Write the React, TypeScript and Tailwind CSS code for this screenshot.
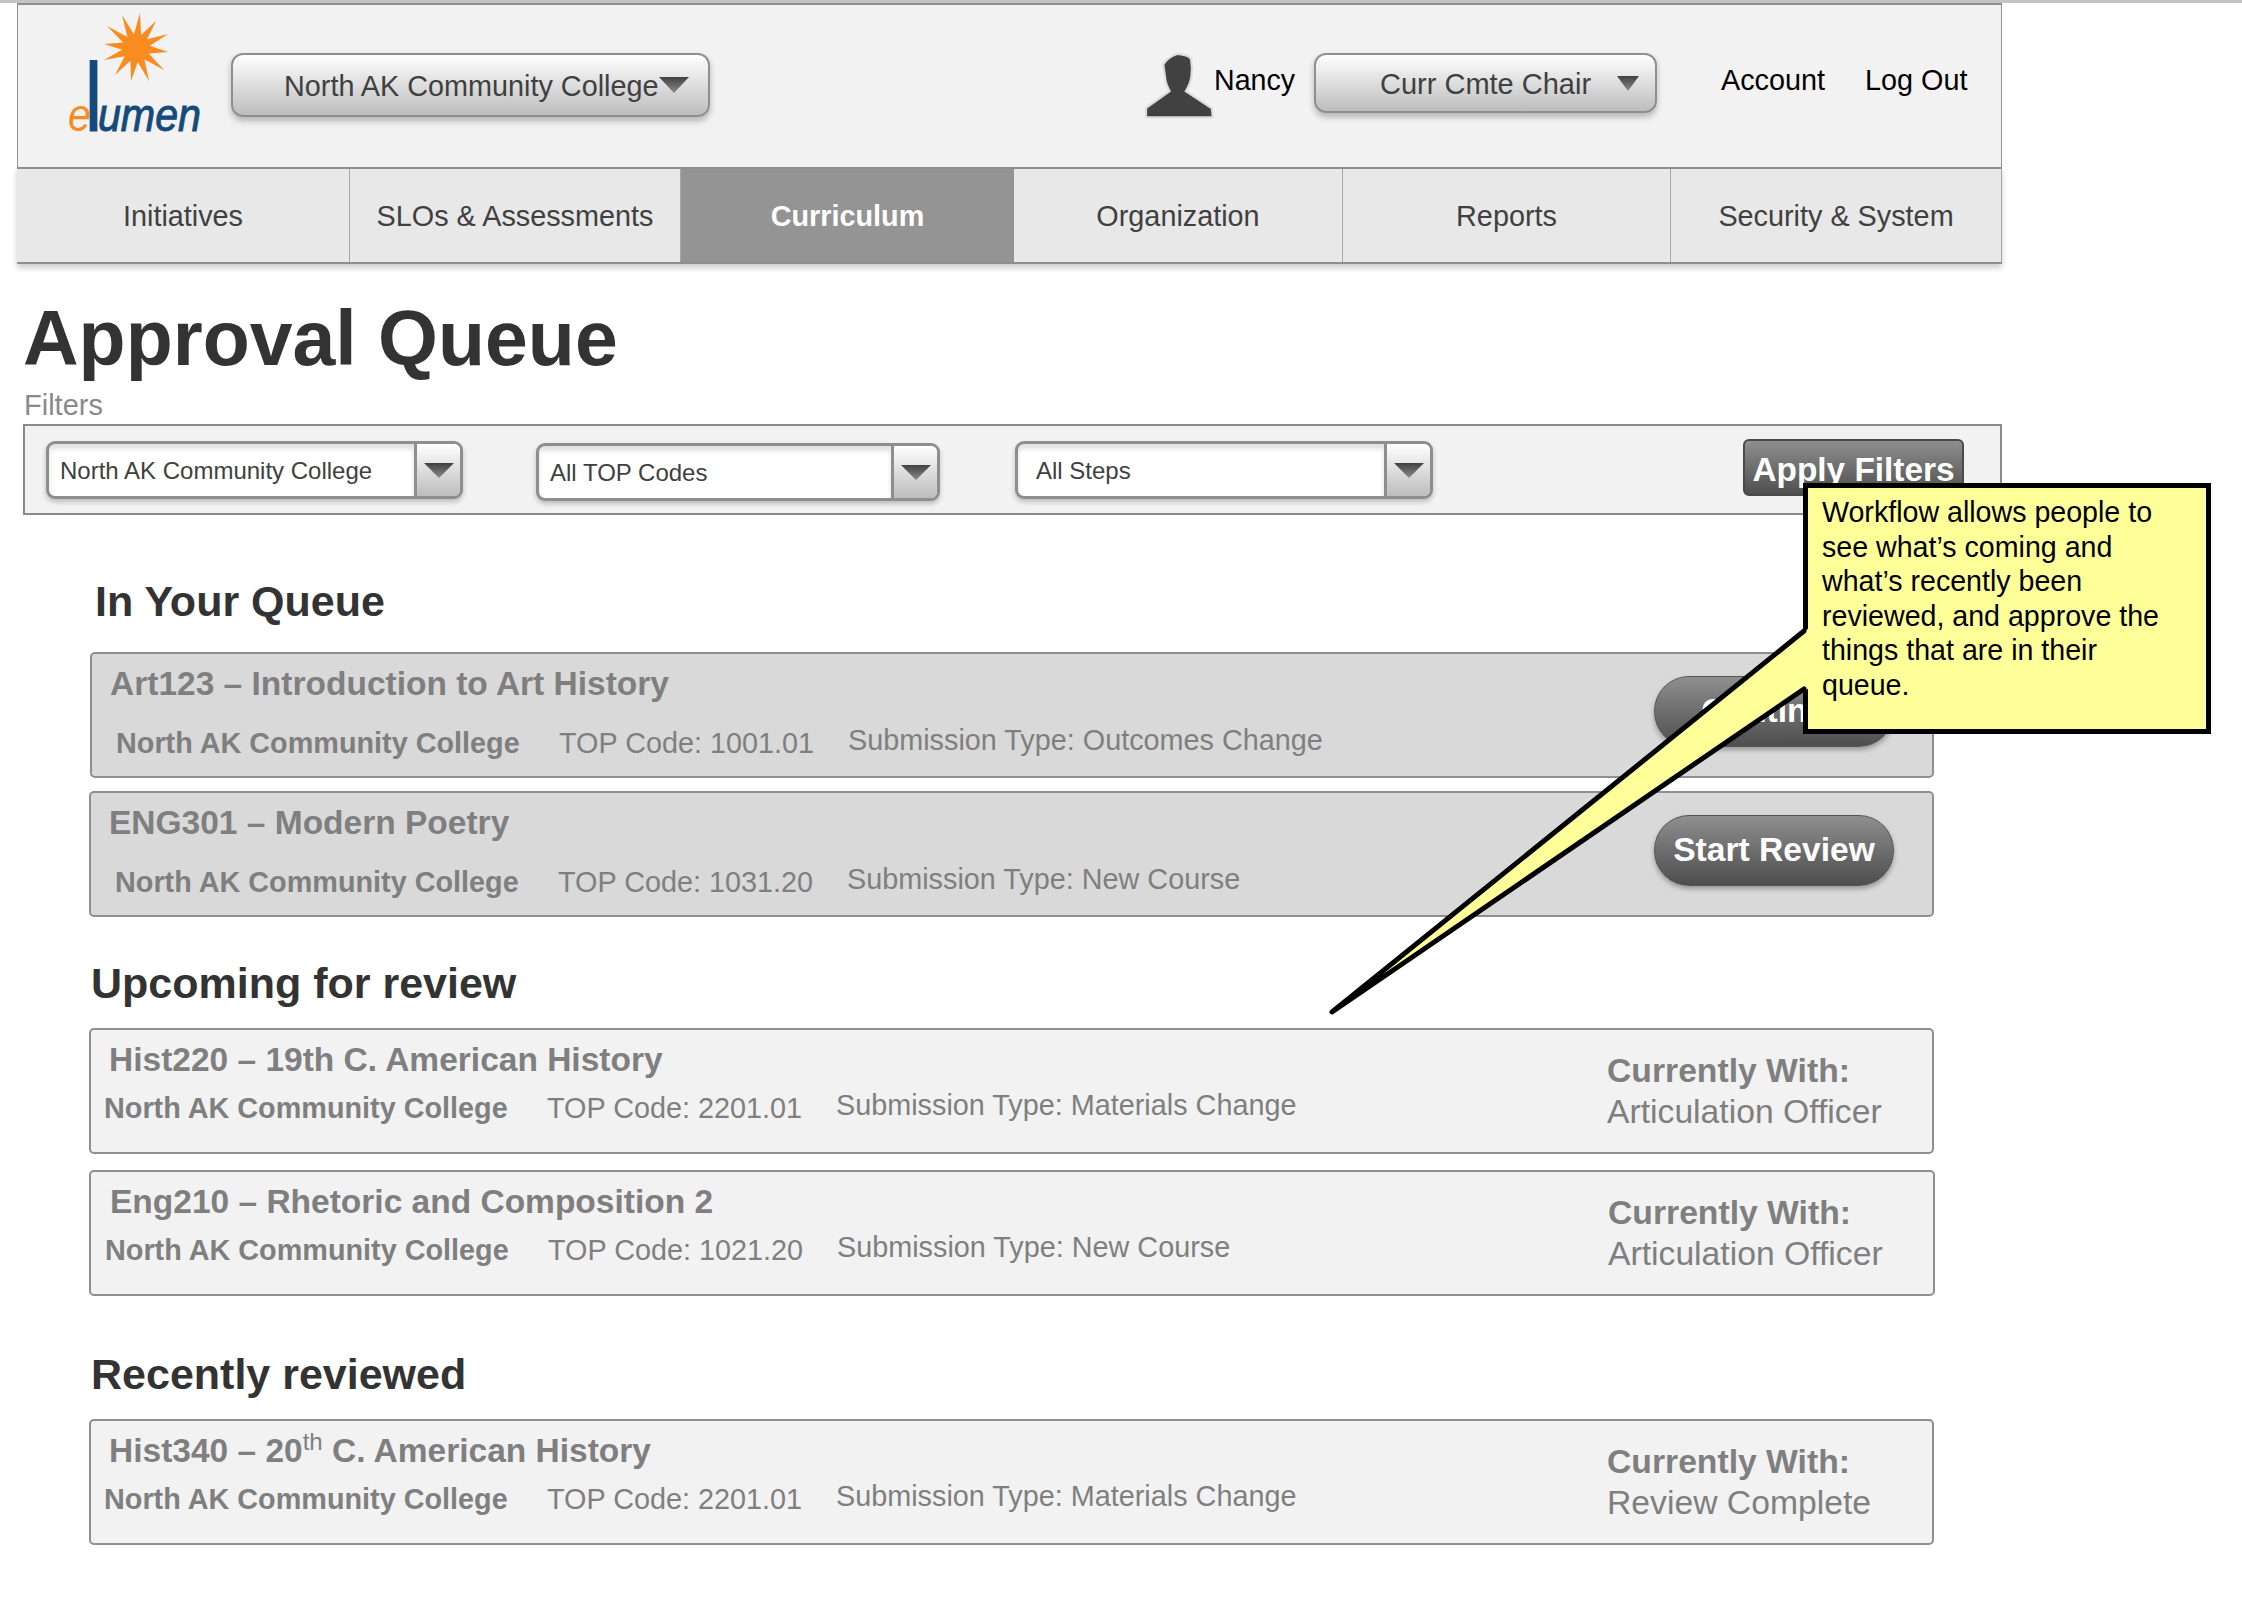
import type { ReactNode } from "react";

const tabs = [
  { label: "Initiatives", width: "w-[333px]" },
  { label: "SLOs & Assessments", width: "w-[331px]" },
  { label: "Curriculum", width: "w-[333px]", active: true },
  { label: "Organization", width: "w-[329px]" },
  { label: "Reports", width: "w-[328px]" },
  { label: "Security & System", width: "w-[331px]" },
];

const sunTips = [
  [99, 13], [115, 21], [127, 34], [127, 52], [123, 70], [108, 81],
  [90, 81], [74, 75], [63, 60], [63, 44], [66, 26], [81, 15],
];

function sunPoints() {
  const cx = 95;
  const cy = 48;
  const pts: string[] = [];
  sunTips.forEach(([x, y], i) => {
    const [nx, ny] = sunTips[(i + 1) % sunTips.length];
    pts.push(`${x},${y}`);
    const mx = (x + nx) / 2 - cx;
    const my = (y + ny) / 2 - cy;
    const len = Math.hypot(mx, my);
    pts.push(`${cx + (mx / len) * 14},${cy + (my / len) * 14}`);
  });
  return pts.join(" ");
}

function Logo() {
  return (
    <svg viewBox="0 8 170 132" className="ml-[23px] mt-[3px] h-[132px] w-[170px] shrink-0">
      <polygon points={sunPoints()} fill="#f98b1f" />
      <text x="27" y="131" fontFamily="Liberation Sans" fontSize="46" fill="#154a7c" textLength="133" lengthAdjust="spacingAndGlyphs">
        <tspan fill="#f98b1f" fontStyle="italic">e</tspan>
        <tspan dx="-8" fontSize="98">l</tspan>
        <tspan dx="-6" fontStyle="italic" stroke="#154a7c" strokeWidth="1">umen</tspan>
      </text>
    </svg>
  );
}

function Person() {
  return (
    <svg viewBox="60 60 240 220" className="ml-[431px] mt-[45px] h-[73px] w-[80px] shrink-0">
      <path
        d="M170 75 Q200 78 207 88 Q212 115 208 140 Q204 165 190 185 L270 238 L272 260 L78 260 L78 236 L150 185 Q136 160 135 140 L130 105 Q140 85 170 75 Z"
        fill="#414141"
        stroke="#dcdcdc"
        strokeWidth="13"
        paintOrder="stroke"
        strokeLinejoin="round"
      />
    </svg>
  );
}

function Arrow({ className }: { className: string }) {
  return (
    <svg viewBox="0 0 30 16" className={className} preserveAspectRatio="none">
      <defs>
        <linearGradient id="arrowFill" x1="0" y1="0" x2="0" y2="1">
          <stop offset="0" stopColor="#404040" />
          <stop offset="1" stopColor="#8c8c8c" />
        </linearGradient>
      </defs>
      <polygon points="0,0 30,0 15,16" fill="url(#arrowFill)" />
    </svg>
  );
}

function Select({ label, className, width, textPad }: { label: string; className: string; width: string; textPad: string }) {
  return (
    <div className={`flex h-[58px] overflow-hidden rounded-[9px] border-[3px] border-[#8e8e8e] bg-white shadow-[0_3px_5px_rgba(0,0,0,0.22)] ${width} ${className}`}>
      <div className={`flex min-w-0 flex-1 items-center whitespace-nowrap pt-[2px] text-[24px] text-[#404040] shadow-[inset_0_5px_5px_rgba(0,0,0,0.12)] ${textPad}`}>
        {label}
      </div>
      <div className="flex w-[46px] items-center justify-center border-l-[3px] border-[#8e8e8e] bg-linear-to-b from-white to-[#bdbdbd]">
        <Arrow className="h-[15px] w-[30px]" />
      </div>
    </div>
  );
}

function Heading({ children, className }: { children: ReactNode; className: string }) {
  return <h2 className={`h-[44px] text-[43px] font-bold leading-[44px] text-[#333333] ${className}`}>{children}</h2>;
}

type CardProps = {
  title: ReactNode;
  top: string;
  submission: string;
  shaded?: boolean;
  titleClass: string;
  rowClass: string;
  widthClass: string;
  titleGap: string;
  children: ReactNode;
};

function QueueCard({ title, top, submission, shaded, titleClass, rowClass, widthClass, titleGap, children }: CardProps) {
  return (
    <div className={`flex h-[126px] items-start justify-between rounded-[5px] border-2 border-[#8f8f8f] ${shaded ? "bg-[#d9d9d9]" : "bg-[#f2f2f2]"} ${widthClass}`}>
      <div className="pt-[10px] text-[#7f7f7f]">
        <div className={`h-[40px] whitespace-nowrap text-[33.5px] font-bold leading-[40px] ${titleClass}`}>{title}</div>
        <div className={`flex items-center whitespace-nowrap text-[28.8px] leading-[36px] ${titleGap} ${rowClass}`}>
          <span className="w-[443px] font-bold">North AK Community College</span>
          <span className="w-[289px]">TOP Code: {top}</span>
          <span className="mb-[6px]">Submission Type: {submission}</span>
        </div>
      </div>
      {children}
    </div>
  );
}

function ReviewButton({ label }: { label: string }) {
  return (
    <div className="mr-[38px] mt-[22px] flex h-[71px] w-[240px] items-center justify-center rounded-[35px] border border-[#555555] bg-linear-to-b from-[#8f8f8f] to-[#4e4e4e] text-[33.6px] font-bold text-white shadow-[0_3px_5px_rgba(0,0,0,0.3)]">
      {label}
    </div>
  );
}

function CurrentlyWith({ status }: { status: string }) {
  return (
    <div className="mt-[20px] w-[325px] whitespace-nowrap text-[33.7px] leading-[41px] text-[#7f7f7f]">
      <div className="font-bold">Currently With:</div>
      <div>{status}</div>
    </div>
  );
}

export default function App() {
  return (
    <div className="relative min-h-[1604px] w-[2242px] overflow-hidden bg-white font-['Liberation_Sans',Arial,sans-serif]">
      <div className="h-[3px] bg-[#c4c4c4]" />

      <header className="ml-[17px] w-[1985px] border-x border-t-2 border-[#8f8f8f] bg-[#f2f2f2]">
        <div className="flex h-[162px] items-start">
          <Logo />
          <div className="ml-[20px] mt-[48px] flex h-[64px] w-[479px] shrink-0 items-center justify-between rounded-[12px] border-2 border-[#8f8f8f] bg-linear-to-b from-white to-[#bdbdbd] pl-[51px] pr-[20px] text-[28.8px] text-[#404040] shadow-[0_4px_6px_rgba(0,0,0,0.25)]">
            <span className="whitespace-nowrap pt-[3px]">North AK Community College</span>
            <Arrow className="h-[16px] w-[30px] shrink-0" />
          </div>
          <Person />
          <span className="-ml-[7px] mt-[55px] w-[100px] text-[28.6px] leading-[40px] text-black">Nancy</span>
          <div className="mt-[48px] flex h-[60px] w-[343px] shrink-0 items-center rounded-[12px] border-2 border-[#8f8f8f] bg-linear-to-b from-white to-[#bdbdbd] pl-[64px] text-[29px] text-[#404040] shadow-[0_4px_6px_rgba(0,0,0,0.25)]">
            <span className="whitespace-nowrap pt-[3px]">Curr Cmte Chair</span>
            <Arrow className="ml-[26px] h-[15px] w-[22px] shrink-0" />
          </div>
          <span className="ml-[64px] mt-[55px] text-[28.8px] leading-[40px] text-black">Account</span>
          <span className="ml-[40px] mt-[55px] text-[28.8px] leading-[40px] text-black">Log Out</span>
        </div>
      </header>

      <nav className="ml-[17px] flex h-[97px] w-[1985px] border-y-2 border-[#8f8f8f] bg-[#e8e8e8] shadow-[0_4px_6px_rgba(0,0,0,0.2)]">
        {tabs.map((tab) => (
          <div
            key={tab.label}
            className={
              tab.active
                ? `flex items-center justify-center bg-[#949494] pt-[2px] text-[28.8px] font-bold text-white ${tab.width}`
                : `flex items-center justify-center border-r border-[#a6a6a6] pt-[2px] text-[28.8px] text-[#404040] ${tab.width}`
            }
          >
            {tab.label}
          </div>
        ))}
      </nav>

      <main>
        <h1 className="ml-[23px] mt-[33px] h-[82px] text-[77px] font-bold leading-[82px] text-[#333333]">Approval Queue</h1>
        <div className="ml-[24px] mt-[9px] h-[36px] text-[29px] leading-[34px] text-[#8a8a8a]">Filters</div>

        <div className="ml-[23px] flex h-[91px] w-[1979px] items-start border-2 border-[#8a8a8a] bg-[#f2f2f2]">
          <Select label="North AK Community College" textPad="pl-[11px]" width="w-[417px]" className="ml-[21px] mt-[15px]" />
          <Select label="All TOP Codes" textPad="pl-[11px]" width="w-[404px]" className="ml-[73px] mt-[17px]" />
          <Select label="All Steps" textPad="pl-[18px]" width="w-[418px]" className="ml-[75px] mt-[15px]" />
          <div className="ml-[310px] mt-[13px] flex h-[57px] w-[221px] items-center justify-center rounded-[6px] border-2 border-[#4a4a4a] bg-linear-to-b from-[#8f8f8f] to-[#505050] pt-[6px] text-[33.4px] font-bold text-white">
            <span className="whitespace-nowrap">Apply Filters</span>
          </div>
        </div>

        <Heading className="ml-[95px] mt-[64px]">In Your Queue</Heading>
        <div className="ml-[90px] mt-[29px]">
          <QueueCard shaded title="Art123 – Introduction to Art History" top="1001.01" submission="Outcomes Change" titleClass="ml-[18px]" rowClass="ml-[24px]" titleGap="mt-[18px]" widthClass="w-[1844px]">
            <ReviewButton label="Continue" />
          </QueueCard>
        </div>
        <div className="ml-[89px] mt-[13px]">
          <QueueCard shaded title="ENG301 – Modern Poetry" top="1031.20" submission="New Course" titleClass="ml-[18px]" rowClass="ml-[24px]" titleGap="mt-[18px]" widthClass="w-[1845px]">
            <ReviewButton label="Start Review" />
          </QueueCard>
        </div>

        <Heading className="ml-[91px] mt-[44px]">Upcoming for review</Heading>
        <div className="ml-[89px] mt-[23px]">
          <QueueCard title="Hist220 – 19th C. American History" top="2201.01" submission="Materials Change" titleClass="ml-[18px]" rowClass="ml-[13px]" titleGap="mt-[7px]" widthClass="w-[1845px]">
            <CurrentlyWith status="Articulation Officer" />
          </QueueCard>
        </div>
        <div className="ml-[89px] mt-[16px]">
          <QueueCard title="Eng210 – Rhetoric and Composition 2" top="1021.20" submission="New Course" titleClass="ml-[19px]" rowClass="ml-[14px]" titleGap="mt-[7px]" widthClass="w-[1846px]">
            <CurrentlyWith status="Articulation Officer" />
          </QueueCard>
        </div>

        <Heading className="ml-[91px] mt-[56px]">Recently reviewed</Heading>
        <div className="ml-[89px] mt-[23px]">
          <QueueCard
            title={
              <>
                Hist340 – 20<sup className="text-[24px] font-normal">th</sup> C. American History
              </>
            }
            top="2201.01"
            submission="Materials Change"
            titleClass="ml-[18px]"
            rowClass="ml-[13px]"
            titleGap="mt-[7px]"
            widthClass="w-[1845px]"
          >
            <CurrentlyWith status="Review Complete" />
          </QueueCard>
        </div>
      </main>

      {/* callout overlay */}
      <div className="absolute left-[1803px] top-[483px] h-[251px] w-[408px] border-[5px] border-black bg-[#ffff99] pl-[14px] pt-[7px] text-[28.6px] leading-[34.6px] text-black">
        Workflow allows people to
        <br />
        see what’s coming and
        <br />
        what’s recently been
        <br />
        reviewed, and approve the
        <br />
        things that are in their
        <br />
        queue.
      </div>
      <svg className="absolute left-[1300px] top-[600px] h-[440px] w-[520px]" viewBox="1300 600 520 440">
        <polygon points="1809,628 1332,1012 1809,688" fill="#ffff99" />
        <polyline points="1804,631 1332,1012 1804,689" fill="none" stroke="#000000" strokeWidth="5" strokeLinejoin="round" strokeLinecap="round" />
      </svg>
    </div>
  );
}
